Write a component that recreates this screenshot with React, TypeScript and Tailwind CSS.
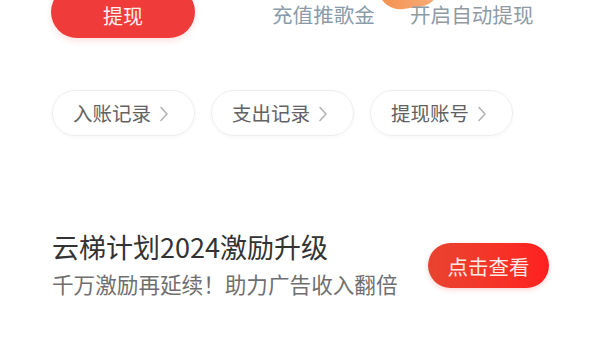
import React from "react";

const Chevron = () => (
  <svg width="10" height="18" viewBox="0 0 10 18" className="ml-[8px] mt-[2px]">
    <polyline points="2,2.5 8,9 2,15.5" fill="none" stroke="#b3b3b3" strokeWidth="1.6" strokeLinecap="round" strokeLinejoin="round" />
  </svg>
);

const Pill = ({ label }: { label: string }) => (
  <div className="w-[143px] h-[46px] rounded-full border border-[#eeeeee] flex items-center pl-[20px] text-[19.5px] text-[#626262] shadow-[0_1px_4px_rgba(0,0,0,0.04)]">
    <span className="leading-none">{label}</span>
    <Chevron />
  </div>
);

export default function App() {
  return (
    <div
      className="relative w-[600px] h-[340px] bg-white overflow-hidden"
      style={{ fontFamily: '"Noto Sans CJK SC", "Noto Sans", sans-serif' }}
    >
      {/* orange badge fragment */}
      <div className="absolute left-[378px] top-[-36px] w-[62px] h-[44px] rounded-full bg-gradient-to-r from-[#f39150] to-[#f8b07c] rotate-[-8deg]" />

      {/* top row */}
      <div className="relative flex items-start pl-[51px]">
        <div className="w-[144px] h-[52px] -mt-[14px] rounded-full bg-[#f03b3b] flex items-center justify-center pt-[8px] shadow-[0_3px_6px_rgba(240,59,59,0.15)]">
          <span className="text-[20px] text-[#fff2f0] leading-none">提现</span>
        </div>
        <div className="ml-[77px] mt-[4px] text-[20.6px] leading-none text-[#8a9bab]">充值推歌金</div>
        <div className="ml-[35px] mt-[4px] text-[20.6px] leading-none text-[#8f9aa4]">开启自动提现</div>
      </div>

      {/* pills */}
      <div className="flex gap-[16px] pl-[52px] mt-[52px]">
        <Pill label="入账记录" />
        <Pill label="支出记录" />
        <Pill label="提现账号" />
      </div>

      {/* promo */}
      <div className="flex items-center justify-between pl-[52px] pr-[51px] mt-[97px]">
        <div className="flex flex-col">
          <div className="text-[27px] leading-none text-[#333333]">云梯计划2024激励升级</div>
          <div className="mt-[13px] text-[21.6px] leading-none text-[#6f6f6f]">千万激励再延续！助力广告收入翻倍</div>
        </div>
        <div className="w-[121px] h-[45px] rounded-full bg-gradient-to-r from-[#e8432f] to-[#ff1f1f] flex items-center justify-center mt-[4px] shadow-[0_2px_5px_rgba(232,50,40,0.2)]">
          <span className="text-[20.5px] leading-none text-[#ffe9e4]">点击查看</span>
        </div>
      </div>
    </div>
  );
}
